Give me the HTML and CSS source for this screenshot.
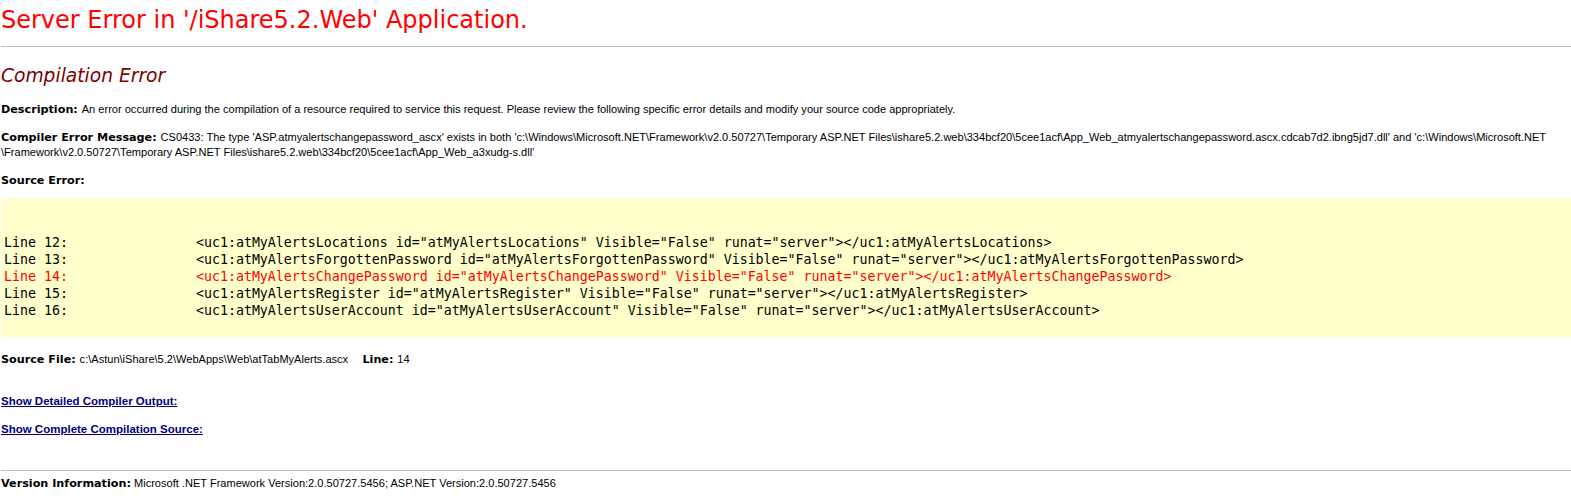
FILE: index.html
```html
<!DOCTYPE html>
<html>
<head>
<meta charset="utf-8">
<title>Compilation Error</title>
<link rel="stylesheet" href="styles.css">
</head>
<body>
<header class="page-head">
  <h1 class="title">Server Error in '/iShare5.2.Web' Application.</h1>
  <hr class="rule">
  <h2 class="subtitle">Compilation Error</h2>
</header>

<main class="details">
  <div class="row row-desc"><b class="label">Description: </b>An error occurred during the compilation of a resource required to service this request. Please review the following specific error details and modify your source code appropriately.</div>

  <div class="row row-msg"><b class="label">Compiler Error Message: </b>CS0433: The type 'ASP.atmyalertschangepassword_ascx' exists in both 'c:\Windows\Microsoft.NET\Framework\v2.0.50727\Temporary ASP.NET Files\ishare5.2.web\334bcf20\5cee1acf\App_Web_atmyalertschangepassword.ascx.cdcab7d2.ibng5jd7.dll' and 'c:\Windows\Microsoft.NET<br>\Framework\v2.0.50727\Temporary ASP.NET Files\ishare5.2.web\334bcf20\5cee1acf\App_Web_a3xudg-s.dll'</div>

  <div class="row row-src"><b class="label">Source Error:</b></div>

  <div class="source-box"><pre class="code">Line 12:                &lt;uc1:atMyAlertsLocations id="atMyAlertsLocations" Visible="False" runat="server"&gt;&lt;/uc1:atMyAlertsLocations&gt;
Line 13:                &lt;uc1:atMyAlertsForgottenPassword id="atMyAlertsForgottenPassword" Visible="False" runat="server"&gt;&lt;/uc1:atMyAlertsForgottenPassword&gt;
<span class="err-line">Line 14:                &lt;uc1:atMyAlertsChangePassword id="atMyAlertsChangePassword" Visible="False" runat="server"&gt;&lt;/uc1:atMyAlertsChangePassword&gt;</span>
Line 15:                &lt;uc1:atMyAlertsRegister id="atMyAlertsRegister" Visible="False" runat="server"&gt;&lt;/uc1:atMyAlertsRegister&gt;
Line 16:                &lt;uc1:atMyAlertsUserAccount id="atMyAlertsUserAccount" Visible="False" runat="server"&gt;&lt;/uc1:atMyAlertsUserAccount&gt;</pre></div>

  <div class="row row-file"><b class="label">Source File: </b>c:\Astun\iShare\5.2\WebApps\Web\atTabMyAlerts.ascx&nbsp;&nbsp;&nbsp;&nbsp;<b class="label label-line">Line: </b>14</div>

  <div class="row row-link1"><a class="expandable" href="#">Show Detailed Compiler Output:</a></div>
  <div class="row row-link2"><a class="expandable" href="#">Show Complete Compilation Source:</a></div>

  <hr class="rule rule-foot">
  <div class="row row-version"><b class="label">Version Information:</b>&nbsp;Microsoft .NET Framework Version:2.0.50727.5456; ASP.NET Version:2.0.50727.5456</div>
</main>
</body>
</html>
```

FILE: styles.css
```css
html, body {
  margin: 0;
  padding: 0;
  background: #ffffff;
}

body {
  padding-left: 1px;
  font-family: "Liberation Sans", Arial, sans-serif;
  font-size: 11.05px;
  color: #000000;
}

.page-head {
  display: block;
}

.title {
  margin: 6px 0 0;
  font-family: "DejaVu Sans", Verdana, sans-serif;
  font-weight: normal;
  font-size: 24px;
  line-height: 28px;
  color: #ff0000;
}

.rule {
  margin: 12px 0 0;
  border: 0;
  border-top: 1px solid #c0c0c0;
  height: 0;
}

.subtitle {
  margin: 18px 0 0;
  font-family: "DejaVu Sans", Verdana, sans-serif;
  font-style: italic;
  font-weight: normal;
  font-size: 18.67px;
  line-height: 22px;
  color: #800000;
}

.row {
  line-height: 15px;
  white-space: nowrap;
}

.label {
  font-family: "DejaVu Sans", Verdana, sans-serif;
  font-weight: bold;
  font-size: 11.2px;
  color: #000000;
}

.label-line {
  margin-left: 2px;
}

.row-desc { margin-top: 15px; }
.row-msg { margin-top: 13px; }
.row-src { margin-top: 13px; }

.source-box {
  margin-top: 11px;
  background: #ffffcc;
  padding: 35px 3px 18px;
}

.code {
  margin: 0;
  font-family: "DejaVu Sans Mono", "Lucida Console", monospace;
  font-size: 13.29px;
  line-height: 17px;
  color: #000000;
}

.err-line {
  color: #ff0000;
}

.row-file { margin-top: 15px; }
.row-link1 { margin-top: 27px; }
.row-link2 { margin-top: 13px; }

.expandable {
  font-family: "Liberation Sans", Arial, sans-serif;
  font-weight: bold;
  font-size: 11.5px;
  color: #000080;
  text-decoration: underline;
}

.rule-foot {
  margin-top: 33px;
}

.row-version { margin-top: 5px; }
```
